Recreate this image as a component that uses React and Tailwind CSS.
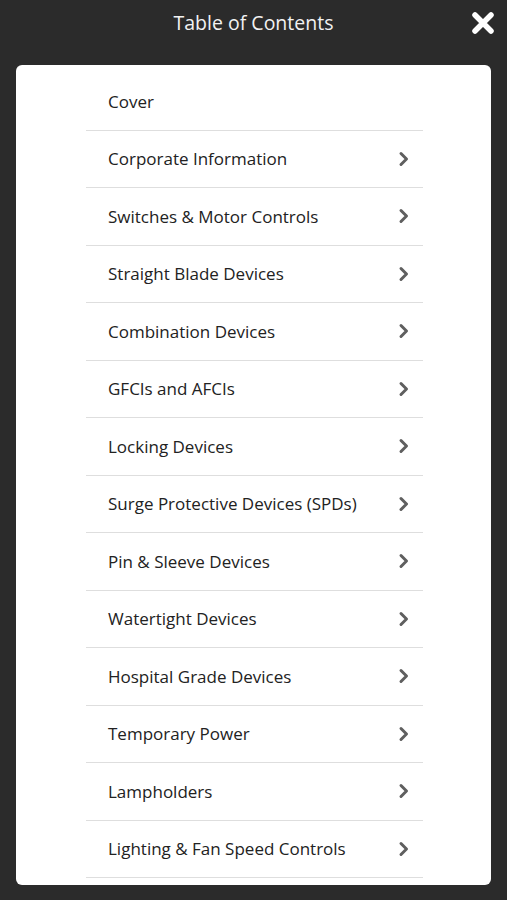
import React from 'react';

const sections = [
    'Corporate Information',
    'Switches & Motor Controls',
    'Straight Blade Devices',
    'Combination Devices',
    'GFCIs and AFCIs',
    'Locking Devices',
    'Surge Protective Devices (SPDs)',
    'Pin & Sleeve Devices',
    'Watertight Devices',
    'Hospital Grade Devices',
    'Temporary Power',
    'Lampholders',
    'Lighting & Fan Speed Controls',
];

const Chevron = () => (
    <svg width="12" height="16" viewBox="0 0 12 16" className="shrink-0">
        <path d="M3 2.5 L8.5 8 L3 13.5" fill="none" stroke="#5f5f5f" strokeWidth="3" strokeLinecap="round" strokeLinejoin="round" />
    </svg>
);

const App = () => {
    return (
        <div className="w-[507px] h-[900px] bg-[#2b2b2b] flex flex-col overflow-hidden" style={{ fontFamily: '"Open Sans", "Noto Sans", sans-serif' }}>
            {/* header */}
            <div className="h-[65px] relative flex justify-center pt-[8px]">
                <h1 className="text-[19.5px] text-[#f2f2f2] leading-[30px]">Table of Contents</h1>
                <button className="absolute right-[12px] top-[11px] w-[24px] h-[24px] flex items-center justify-center">
                    <svg width="24" height="24" viewBox="0 0 24 24">
                        <path d="M4 4 L20 20 M20 4 L4 20" stroke="#ffffff" strokeWidth="5.5" strokeLinecap="round" />
                    </svg>
                </button>
            </div>

            {/* list card */}
            <div className="mx-[16px] w-[475px] h-[820px] bg-white rounded-[6px] overflow-hidden pt-[8px]">
                <ul className="w-[337px] ml-[70px]">
                    <li className="h-[57.5px] border-b border-[#dedede] flex items-center pl-[22px] text-[17px] text-[#222]">
                        Cover
                    </li>
                    {sections.map(s => (
                        <li key={s} className="h-[57.5px] border-b border-[#dedede] flex items-center justify-between pl-[22px] pr-[13px] text-[17px] text-[#222]">
                            <span>{s}</span>
                            <Chevron />
                        </li>
                    ))}
                </ul>
            </div>
        </div>
    );
};

export default App;
